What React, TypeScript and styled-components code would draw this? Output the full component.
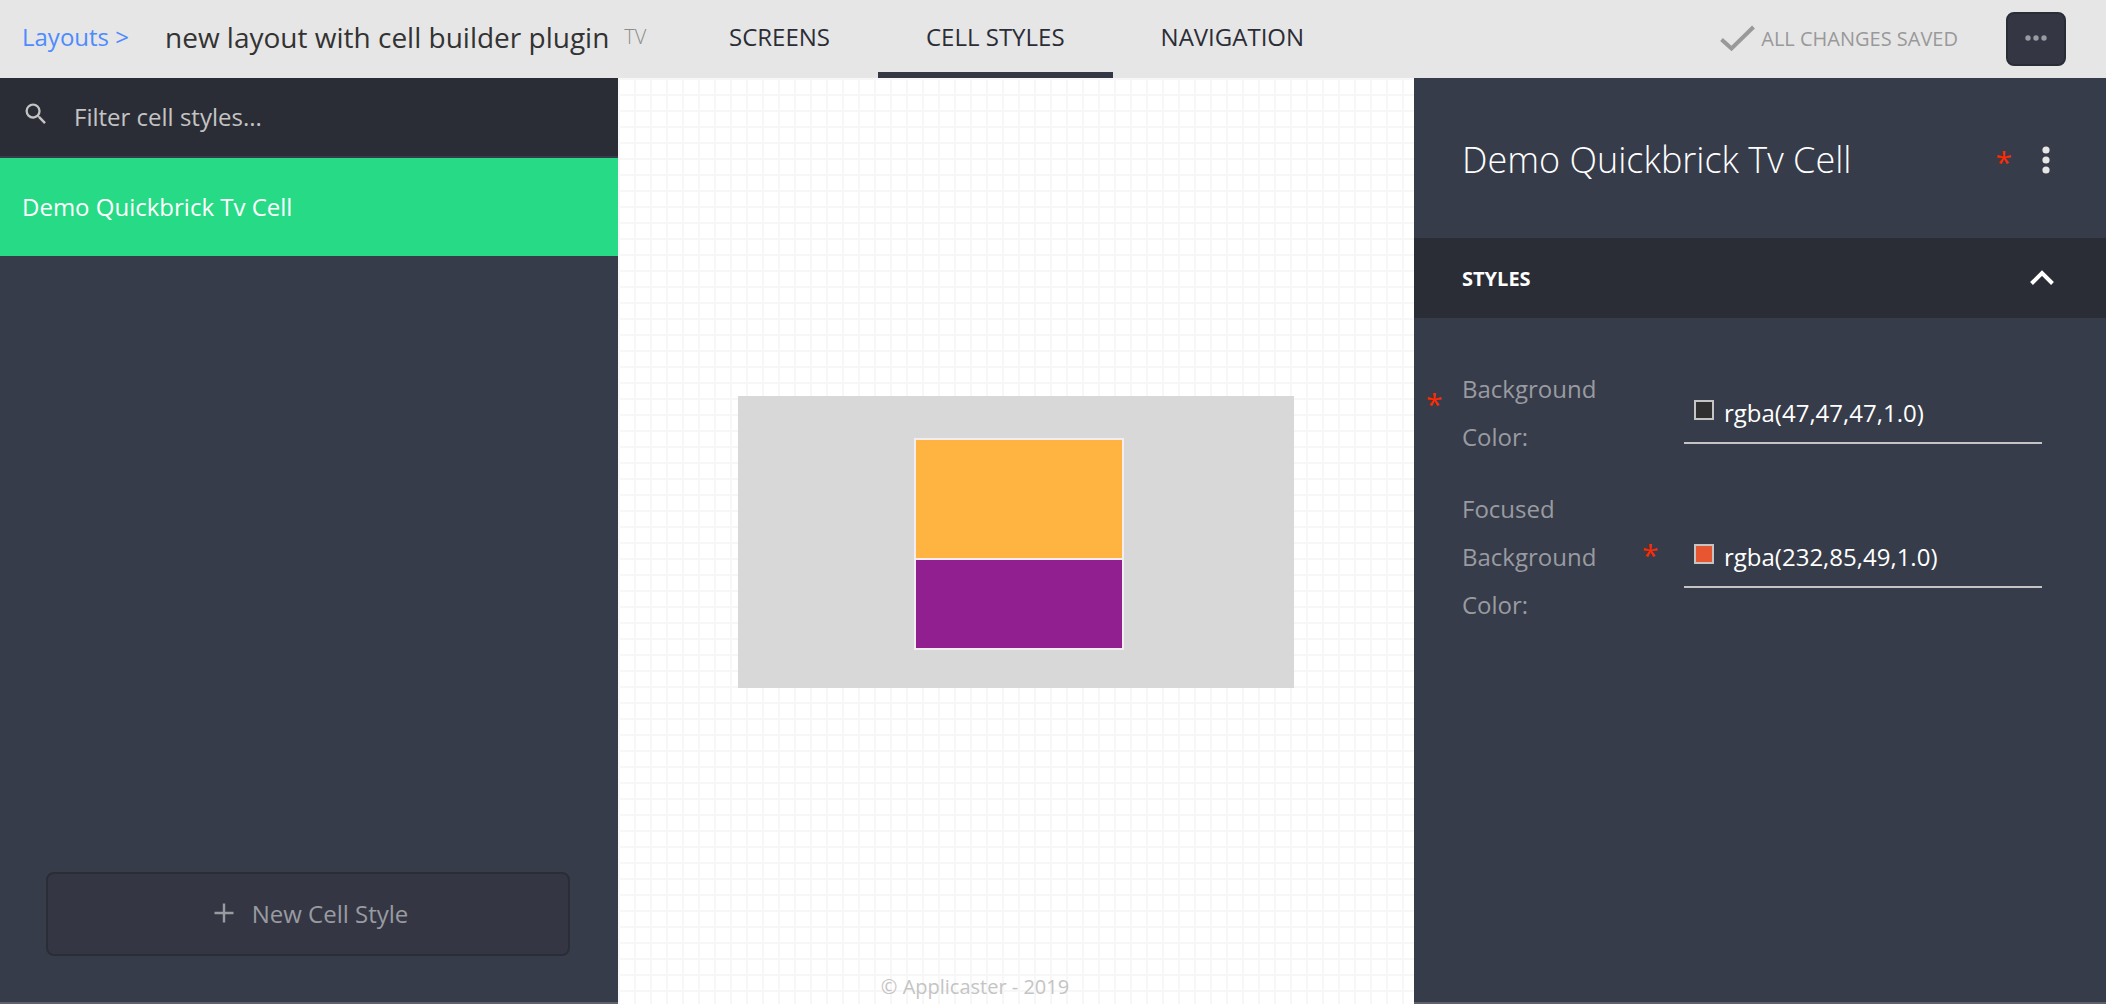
import React, { useState } from "react";
import styled, { createGlobalStyle } from "styled-components";

const GlobalStyle = createGlobalStyle`
  * { box-sizing: border-box; }
  body { margin: 0; }
  body, button, input { font-family: "Open Sans", "Noto Sans", sans-serif; }
`;

const Page = styled.div`
  display: flex;
  flex-direction: column;
  min-height: 100vh;
  background: #fff;
  color: #2b2d36;
`;

const TopBar = styled.header`
  display: flex;
  align-items: stretch;
  height: 78px;
  background: #e6e6e6;
`;

const Crumbs = styled.div`
  display: flex;
  align-items: center;
  flex: 0 0 681px;
  padding: 0 0 4px 22px;
  line-height: 40px;
  white-space: nowrap;
`;

const BackLink = styled.a`
  width: 143px;
  font-size: 24px;
  color: #4d8bff;
  text-decoration: none;
`;

const LayoutName = styled.h1`
  margin: 0 15px 0 0;
  font-size: 28px;
  font-weight: 400;
  color: #333;
`;

const Platform = styled.span`
  font-size: 20px;
  font-weight: 300;
  color: #8c8c8c;
`;

const Tabs = styled.nav`
  display: flex;
`;

const Tab = styled.a<{ $active?: boolean }>`
  padding: 17px 48px 0;
  border-bottom: 6px solid ${(p) => (p.$active ? "#343746" : "transparent")};
  font-size: 24px;
  line-height: 40px;
  color: #2b2d36;
  text-decoration: none;
  white-space: nowrap;
`;

const TopActions = styled.div`
  display: flex;
  align-items: center;
  margin-left: auto;
  padding-right: 40px;
`;

const SaveState = styled.span`
  display: flex;
  align-items: center;
  gap: 6px;
  margin-right: 48px;
  padding-bottom: 2px;
  font-size: 20px;
  color: #999;
  white-space: nowrap;
`;

const MoreButton = styled.button`
  display: grid;
  place-items: center;
  width: 60px;
  height: 54px;
  padding: 0 0 2px;
  border: 2px solid #2b2d36;
  border-radius: 8px;
  background: #343743;
`;

const Workspace = styled.div`
  display: flex;
  flex: 1;
`;

const Sidebar = styled.aside`
  display: flex;
  flex-direction: column;
  flex: 0 0 618px;
  border-bottom: 2px solid #5e606c;
  background: #373c4a;
`;

const SearchRow = styled.label`
  display: flex;
  align-items: center;
  height: 80px;
  padding-left: 22px;
  border-bottom: 2px solid #373c4a;
  background: #2b2d36;
`;

const SearchIcon = styled.svg`
  margin: 0 24px 6px 0;
`;

const SearchInput = styled.input`
  flex: 1;
  padding: 0;
  border: 0;
  outline: 0;
  background: transparent;
  font-size: 24px;
  line-height: 40px;
  color: #fff;
  &::placeholder {
    color: #c4c4c4;
    opacity: 1;
  }
`;

const CellItem = styled.button`
  height: 98px;
  padding: 0 22px 2px;
  border: 0;
  background: #27da86;
  font-size: 24px;
  text-align: left;
  color: #fff;
`;

const NewButton = styled.button`
  display: flex;
  align-items: center;
  justify-content: center;
  gap: 18px;
  height: 84px;
  margin: auto 48px 46px 46px;
  padding: 0 0 2px 6px;
  border: 2px solid #2b2d36;
  border-radius: 8px;
  background: #343743;
  font-size: 24px;
  color: #999ba1;
`;

const Canvas = styled.main`
  display: flex;
  flex-direction: column;
  align-items: center;
  flex: 1;
  background-color: #fff;
  background-image: linear-gradient(#f7f7f7 2px, transparent 2px),
    linear-gradient(90deg, #f7f7f7 2px, transparent 2px);
  background-size: 16px 16px;
`;

const Stage = styled.div`
  display: flex;
  flex-direction: column;
  align-items: center;
  width: 556px;
  height: 292px;
  margin: auto 0;
  padding: 42px 0 0 6px;
  background: #d8d8d8;
`;

const CellPreview = styled.div`
  display: grid;
  grid-template-rows: 118px 88px;
  gap: 2px;
  width: 210px;
  border: 2px solid #f3ecf0;
  background: #f3ecf0;
`;

const Block = styled.div<{ $color: string }>`
  background: ${(p) => p.$color};
`;

const CanvasTop = styled.div`
  height: 36px;
`;

const Footer = styled.footer`
  padding-right: 82px;
  font-size: 20px;
  line-height: 34px;
  color: #c4c4c4;
`;

const Panel = styled.aside`
  flex: 0 0 692px;
  border-bottom: 2px solid #5e606c;
  background: #373c4a;
`;

const PanelHeader = styled.div`
  display: flex;
  align-items: center;
  height: 160px;
  padding: 4px 54px 0 48px;
`;

const PanelTitle = styled.h2`
  flex: 1;
  margin: 0;
  font-size: 36px;
  font-weight: 300;
  line-height: 48px;
  color: #fff;
`;

const Required = styled.span`
  font-size: 30px;
  line-height: 48px;
  color: #ff2a00;
`;

const TitleMark = styled(Required)`
  padding-top: 4px;
`;

const MenuButton = styled.button`
  display: flex;
  margin-left: 28px;
  padding: 0;
  border: 0;
  background: transparent;
`;

const SectionToggle = styled.button`
  display: flex;
  align-items: center;
  justify-content: space-between;
  width: 100%;
  height: 80px;
  padding: 0 52px 0 48px;
  border: 0;
  background: #2b2d36;
  font-size: 20px;
  font-weight: 700;
  color: #fff;
`;

const Fields = styled.div`
  display: flex;
  flex-direction: column;
  gap: 24px;
  padding: 47px 64px 48px 12px;
`;

const Field = styled.div`
  display: grid;
  grid-template-columns: 36px 180px 42px 1fr;
  align-items: center;
`;

const FieldLabel = styled.label`
  grid-column: 2;
  width: 140px;
  font-size: 24px;
  line-height: 48px;
  color: #999ba1;
`;

const FieldMark = styled(Required)<{ $outside: boolean }>`
  grid-column: ${(p) => (p.$outside ? 1 : 3)};
  grid-row: 1;
  padding-bottom: ${(p) => (p.$outside ? 18 : 4)}px;
`;

const ColorField = styled.div`
  display: flex;
  align-items: center;
  gap: 10px;
  grid-column: 4;
  grid-row: 1;
  height: 60px;
  margin-top: 2px;
  padding-left: 10px;
  border-bottom: 2px solid #c4c4c4;
`;

const Swatch = styled.span<{ $color: string }>`
  width: 20px;
  height: 20px;
  margin-bottom: 6px;
  border: 2px solid #c4c4c4;
  background: ${(p) => p.$color};
`;

const ColorInput = styled.input`
  flex: 1;
  min-width: 0;
  padding: 0;
  border: 0;
  outline: 0;
  background: transparent;
  font-size: 24px;
  line-height: 40px;
  color: #fff;
`;

type ColorRowProps = { id: string; label: string; initial: string; markOutside?: boolean };

function ColorRow({ id, label, initial, markOutside = false }: ColorRowProps) {
  const [value, setValue] = useState(initial);
  return (
    <Field>
      <FieldMark $outside={markOutside}>*</FieldMark>
      <FieldLabel htmlFor={id}>{label}</FieldLabel>
      <ColorField>
        <Swatch $color={value} />
        <ColorInput id={id} value={value} onChange={(e) => setValue(e.target.value)} />
      </ColorField>
    </Field>
  );
}

export default function App() {
  return (
    <Page>
      <GlobalStyle />
      <TopBar>
        <Crumbs>
          <BackLink href="#layouts">Layouts &gt;</BackLink>
          <LayoutName>new layout with cell builder plugin</LayoutName>
          <Platform>TV</Platform>
        </Crumbs>
        <Tabs>
          <Tab href="#screens">SCREENS</Tab>
          <Tab href="#cell-styles" $active>CELL STYLES</Tab>
          <Tab href="#navigation">NAVIGATION</Tab>
        </Tabs>
        <TopActions>
          <SaveState>
            <svg width="35" height="27" viewBox="0 0 35 27" fill="none" stroke="#999" strokeWidth="4">
              <path d="M1.5 14.5 11.5 23.5 33.5 2" />
            </svg>
            ALL CHANGES SAVED
          </SaveState>
          <MoreButton aria-label="More actions">
            <svg width="22" height="6" viewBox="0 0 22 6" fill="#999ba1">
              <circle cx="3" cy="3" r="2.7" />
              <circle cx="11" cy="3" r="2.7" />
              <circle cx="19" cy="3" r="2.7" />
            </svg>
          </MoreButton>
        </TopActions>
      </TopBar>
      <Workspace>
        <Sidebar>
          <SearchRow>
            <SearchIcon width="28" height="28" viewBox="0 0 24 24" fill="#c4c4c4">
              <path d="M15.5 14h-.79l-.28-.27A6.47 6.47 0 0 0 16 9.5 6.5 6.5 0 1 0 9.5 16c1.61 0 3.09-.59 4.23-1.57l.27.28v.79l5 4.99L20.49 19l-4.99-5zm-6 0C7.01 14 5 11.99 5 9.5S7.01 5 9.5 5 14 7.01 14 9.5 11.99 14 9.5 14z" />
            </SearchIcon>
            <SearchInput type="text" aria-label="Filter cell styles" placeholder="Filter cell styles..." />
          </SearchRow>
          <CellItem>Demo Quickbrick Tv Cell</CellItem>
          <NewButton>
            <svg width="20" height="20" viewBox="0 0 20 20" stroke="#999ba1" strokeWidth="2.4">
              <path d="M10 0.5V19.5M0.5 10H19.5" />
            </svg>
            New Cell Style
          </NewButton>
        </Sidebar>
        <Canvas>
          <CanvasTop />
          <Stage>
            <CellPreview>
              <Block $color="#ffb441" />
              <Block $color="#921f90" />
            </CellPreview>
          </Stage>
          <Footer>© Applicaster - 2019</Footer>
        </Canvas>
        <Panel>
          <PanelHeader>
            <PanelTitle>Demo Quickbrick Tv Cell</PanelTitle>
            <TitleMark>*</TitleMark>
            <MenuButton aria-label="Cell menu">
              <svg width="12" height="28" viewBox="0 0 12 28" fill="#e6e6e6">
                <circle cx="6" cy="4" r="3.6" />
                <circle cx="6" cy="14" r="3.6" />
                <circle cx="6" cy="24" r="3.6" />
              </svg>
            </MenuButton>
          </PanelHeader>
          <SectionToggle aria-expanded="true">
            STYLES
            <svg width="24" height="16" viewBox="0 0 24 16" fill="none" stroke="#fff" strokeWidth="4">
              <path d="M1.5 13.5 12 3 22.5 13.5" />
            </svg>
          </SectionToggle>
          <Fields>
            <ColorRow id="bg" label="Background Color:" initial="rgba(47,47,47,1.0)" markOutside />
            <ColorRow id="focused-bg" label="Focused Background Color:" initial="rgba(232,85,49,1.0)" />
          </Fields>
        </Panel>
      </Workspace>
    </Page>
  );
}
